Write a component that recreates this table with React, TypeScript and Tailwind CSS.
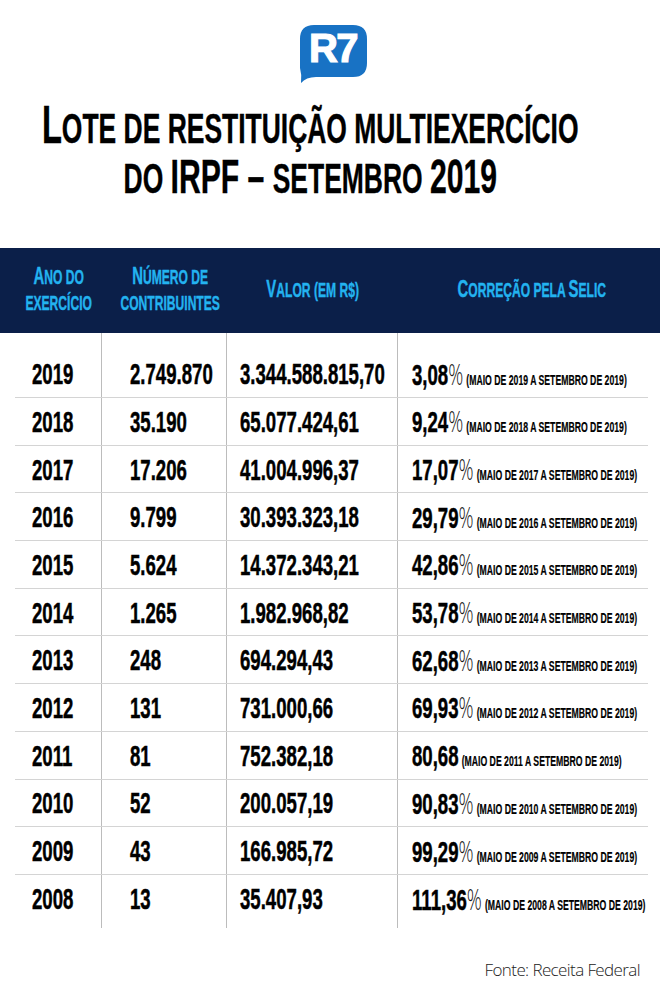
import React from "react";

// Lote de restituição multiexercício — IRPF setembro 2019
const ROWS = [
  { ano: "2019", contrib: "2.749.870", valor: "3.344.588.815,70", pct: "3,08" },
  { ano: "2018", contrib: "35.190", valor: "65.077.424,61", pct: "9,24" },
  { ano: "2017", contrib: "17.206", valor: "41.004.996,37", pct: "17,07" },
  { ano: "2016", contrib: "9.799", valor: "30.393.323,18", pct: "29,79" },
  { ano: "2015", contrib: "5.624", valor: "14.372.343,21", pct: "42,86" },
  { ano: "2014", contrib: "1.265", valor: "1.982.968,82", pct: "53,78" },
  { ano: "2013", contrib: "248", valor: "694.294,43", pct: "62,68" },
  { ano: "2012", contrib: "131", valor: "731.000,66", pct: "69,93" },
  { ano: "2011", contrib: "81", valor: "752.382,18", pct: "80,68", noPct: true },
  { ano: "2010", contrib: "52", valor: "200.057,19", pct: "90,83" },
  { ano: "2009", contrib: "43", valor: "166.985,72", pct: "99,29" },
  { ano: "2008", contrib: "13", valor: "35.407,93", pct: "111,36" },
];

// no condensed face is installed, so bold Arial-metric text gets squeezed horizontally
const cond = "font-['Liberation_Sans',Arial,sans-serif] font-bold";

function Logo() {
  return (
    <svg width="67" height="58" viewBox="0 0 67 58">
      <path
        d="M14 0 H53 Q67 0 67 14 V38 Q67 52 53 52 H16 Q6 52 1 58 Q2 50 0 43 V14 Q0 0 14 0Z"
        fill="#1872c4"
      />
      <text
        x="33"
        y="37"
        textAnchor="middle"
        fill="#ffffff"
        stroke="#ffffff"
        strokeWidth="1.2"
        fontFamily="Liberation Sans, Arial, sans-serif"
        fontWeight="700"
        fontSize="40"
        letterSpacing="-1.5"
      >
        R7
      </text>
    </svg>
  );
}

function HeadLine({ big, small }: { big?: string; small: string }) {
  return (
    <div className="whitespace-nowrap leading-[24px]">
      {big && <span className="text-[24px]">{big}</span>}
      <span className="text-[19.5px] uppercase">{small}</span>
    </div>
  );
}

export default function App() {
  return (
    <div className="w-[660px] h-[990px] bg-white flex flex-col overflow-hidden">
      {/* Logo */}
      <div className="flex justify-center pt-[25px] pl-[7px]">
        <Logo />
      </div>

      {/* Title */}
      <div className={`${cond} text-black mt-[23px] pr-[40px] flex justify-center`}>
        <div className="flex flex-col items-center w-max shrink-0 scale-x-[0.615] origin-center leading-[38px] [-webkit-text-stroke:0.4px_black]">
          <div className="whitespace-nowrap">
            <span className="text-[53px]">L</span>
            <span className="text-[43px] uppercase">ote de restituição multiexercício</span>
          </div>
          <div className="whitespace-nowrap">
            <span className="text-[43px] uppercase">do </span>
            <span className="text-[49px]">IRPF – </span>
            <span className="text-[43px] uppercase">setembro </span>
            <span className="text-[49px]">2019</span>
          </div>
        </div>
      </div>

      {/* Header band */}
      <div
        className={`${cond} text-[#23b3f0] bg-[#0b1f49] h-[85px] mt-[41px] pl-[15px] grid grid-cols-[87px_125px_171px_1fr] [-webkit-text-stroke:0.4px_#23b3f0]`}
      >
        <div className="flex items-center justify-center">
          <div className="w-max shrink-0 flex flex-col items-center scale-x-[0.62] origin-center">
            <HeadLine big="A" small="no do" />
            <HeadLine small="exercício" />
          </div>
        </div>
        <div className="flex items-center justify-center pl-[11px]">
          <div className="w-max shrink-0 flex flex-col items-center scale-x-[0.62] origin-center">
            <HeadLine big="N" small="úmero de" />
            <HeadLine small="contribuintes" />
          </div>
        </div>
        <div className="flex items-center justify-center">
          <div className="w-max shrink-0 scale-x-[0.62] origin-center">
            <HeadLine big="V" small="alor (em R$)" />
          </div>
        </div>
        <div className="flex items-center justify-center pl-[6px]">
          <div className="w-max shrink-0 whitespace-nowrap leading-[24px] scale-x-[0.62] origin-center">
            <span className="text-[24px]">C</span>
            <span className="text-[19.5px] uppercase">orreção pela </span>
            <span className="text-[24px]">S</span>
            <span className="text-[19.5px] uppercase">elic</span>
          </div>
        </div>
      </div>

      {/* Body */}
      <div className={`${cond} text-black ml-[15px] w-[633px] text-[30px] [-webkit-text-stroke:0.5px_black]`}>
        {ROWS.map((r, i) => {
          const first = i === 0;
          const last = i === ROWS.length - 1;
          const pad = first ? "pt-[17px]" : last ? "pb-[5px]" : "";
          const cell = `flex items-center border-r border-[#bcbcbc] ${pad}`;
          return (
            <div
              key={r.ano}
              className={`grid grid-cols-[87px_125px_171px_1fr] ${
                first ? "h-[65px]" : last ? "h-[52.7px]" : "h-[47.7px]"
              } ${last ? "" : "border-b border-[#d4d4d4]"}`}
            >
              <div className={`${cell} pl-[17px]`}>
                <span className="inline-block whitespace-nowrap scale-x-[0.62] origin-left">{r.ano}</span>
              </div>
              <div className={`${cell} pl-[28px]`}>
                <span className="inline-block whitespace-nowrap scale-x-[0.62] origin-left">{r.contrib}</span>
              </div>
              <div className={`${cell} pl-[13px]`}>
                <span className="inline-block whitespace-nowrap scale-x-[0.62] origin-left">{r.valor}</span>
              </div>
              <div className={`flex items-center pl-[14px] ${pad}`}>
                <span className="inline-flex items-baseline whitespace-nowrap scale-x-[0.62] origin-left">
                  <span>{r.pct}</span>
                  {!r.noPct && (
                    <span className="font-['Open_Sans',sans-serif] font-light text-[30px] text-[#1a1a1a] [-webkit-text-stroke:0px_black]">
                      %
                    </span>
                  )}
                  <span className="ml-[5px] text-[14px] uppercase [-webkit-text-stroke:0.2px_black]">
                    (maio de {r.ano} a setembro de 2019)
                  </span>
                </span>
              </div>
            </div>
          );
        })}
      </div>

      {/* Footer */}
      <div className="flex justify-end pr-[20px] mt-[29px]">
        <span className="font-['Open_Sans',sans-serif] font-light text-[17px] tracking-[-0.6px] text-[#222]">
          Fonte: Receita Federal
        </span>
      </div>
    </div>
  );
}
